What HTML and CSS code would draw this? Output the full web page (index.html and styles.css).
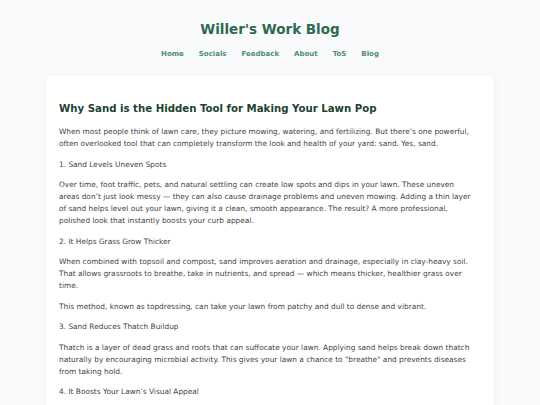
FILE: index.html
```html
<!DOCTYPE html>
<html lang="en">
<head>
    <meta charset="UTF-8">
    <meta name="viewport" content="width=device-width, initial-scale=1.0">
    <title>Willer's Work Blog</title>
    <link rel="stylesheet" href="styles.css">
</head>
<body>

<header class="site-header">
    <h1 class="site-title">Willer's Work Blog</h1>
    <nav class="site-nav">
        <a href="#">Home</a>
        <a href="#">Socials</a>
        <a href="#">Feedback</a>
        <a href="#">About</a>
        <a href="#">ToS</a>
        <a href="#">Blog</a>
    </nav>
</header>

<main class="post">
    <h2 class="post-title">Why Sand is the Hidden Tool for Making Your Lawn Pop</h2>
    <p>When most people think of lawn care, they picture mowing, watering, and fertilizing. But there’s one powerful, often overlooked tool that can completely transform the look and health of your yard: sand. Yes, sand.</p>
    <p>1. Sand Levels Uneven Spots</p>
    <p>Over time, foot traffic, pets, and natural settling can create low spots and dips in your lawn. These uneven areas don’t just look messy — they can also cause drainage problems and uneven mowing. Adding a thin layer of sand helps level out your lawn, giving it a clean, smooth appearance. The result? A more professional, polished look that instantly boosts your curb appeal.</p>
    <p>2. It Helps Grass Grow Thicker</p>
    <p>When combined with topsoil and compost, sand improves aeration and drainage, especially in clay-heavy soil. That allows grassroots to breathe, take in nutrients, and spread — which means thicker, healthier grass over time.</p>
    <p>This method, known as topdressing, can take your lawn from patchy and dull to dense and vibrant.</p>
    <p>3. Sand Reduces Thatch Buildup</p>
    <p>Thatch is a layer of dead grass and roots that can suffocate your lawn. Applying sand helps break down thatch naturally by encouraging microbial activity. This gives your lawn a chance to "breathe" and prevents diseases from taking hold.</p>
    <p>4. It Boosts Your Lawn’s Visual Appeal</p>
</main>

</body>
</html>
```

FILE: styles.css
```css
body {
    font-family: Verdana, "DejaVu Sans", sans-serif;
    margin: 0;
    background-color: #f8fafb;
    color: #444;
}
.site-header {
    text-align: center;
    padding-top: 21px;
}
.site-title {
    margin: 0;
    font-size: 13.5px;
    line-height: 17px;
    color: #2d6a4f;
}
.site-nav {
    display: flex;
    justify-content: center;
    gap: 15px;
    margin-top: 12px;
}
.site-nav a {
    font-size: 7px;
    font-weight: bold;
    color: #4f8f6e;
    text-decoration: none;
}
.post {
    width: 415px;
    margin: 18px auto 0;
    padding: 26px 20px 20px 13px;
    background-color: white;
    border-radius: 5px;
    box-shadow: 0 2px 8px rgba(0, 0, 0, 0.05);
    font-size: 7.4px;
    line-height: 12px;
}
.post-title {
    margin: 0 0 10px;
    font-size: 10.2px;
    line-height: 14px;
    color: #1b4332;
}
.post p {
    margin: 0 0 8.5px;
}
```
